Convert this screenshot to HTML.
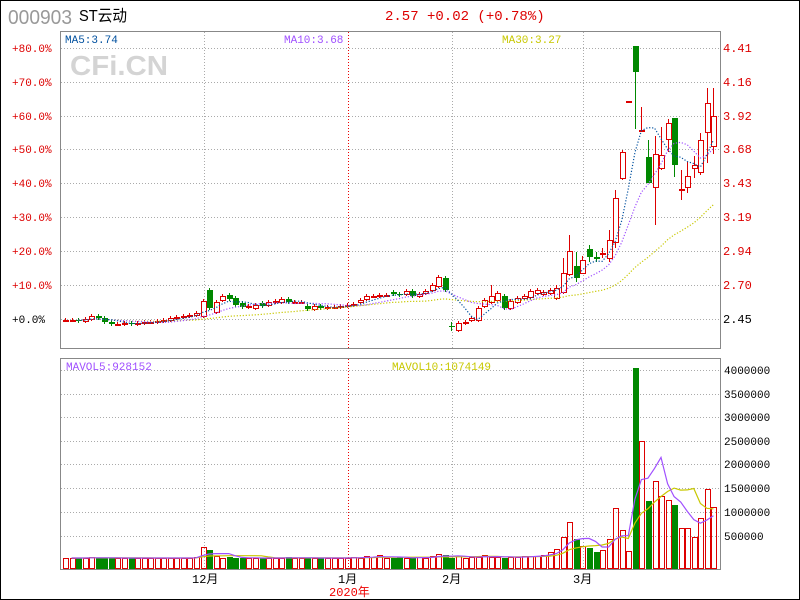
<!DOCTYPE html>
<html><head><meta charset="utf-8"><style>
html,body{margin:0;padding:0;background:#fff}
#w{position:relative;width:798px;height:598px;border:1px solid #000;overflow:hidden}
svg{position:absolute;left:-1px;top:-1px}
text{font-family:"Liberation Mono","Noto Sans CJK SC",monospace}
text.sans{font-family:"Liberation Sans","Noto Sans CJK SC",sans-serif}
</style></head><body><div id="w">
<svg id="s" width="800" height="600" xmlns="http://www.w3.org/2000/svg" shape-rendering="crispEdges">
<text class="sans" x="8" y="24" font-size="20" fill="#999" textLength="64" lengthAdjust="spacingAndGlyphs">000903</text>
<text class="sans" x="79" y="21" font-size="16" fill="#000" textLength="48" lengthAdjust="spacingAndGlyphs">ST云动</text>
<text x="385" y="20" font-size="14" fill="#d00">2.57 +0.02 (+0.78%)</text>
<rect x="60.5" y="31.5" width="660" height="317" fill="none" stroke="#888"/>
<rect x="60.5" y="358.5" width="660" height="211" fill="none" stroke="#888"/>
<text class="sans" x="70" y="75" font-weight="bold" font-size="28" fill="#d4d4d4" textLength="98" lengthAdjust="spacingAndGlyphs">CFi.CN</text>
<g id="grid" stroke="#aaa" stroke-dasharray="1,2"></g>
<g id="ax" font-size="11"></g>
<text x="65" y="43" font-size="11" fill="#00509f">MA5:3.74</text>
<text x="284" y="43" font-size="11" fill="#a050ff">MA10:3.68</text>
<text x="502" y="43" font-size="11" fill="#c8c800">MA30:3.27</text>
<text x="66" y="370" font-size="11" fill="#a050ff">MAVOL5:928152</text>
<text x="392" y="370" font-size="11" fill="#c8c800">MAVOL10:1074149</text>
<g id="c"></g>
<text x="192" y="583" font-size="12" fill="#000">12月</text>
<text x="338" y="583" font-size="12" fill="#000">1月</text>
<text x="442" y="583" font-size="12" fill="#000">2月</text>
<text x="573" y="583" font-size="12" fill="#000">3月</text>
<text x="329" y="596" font-size="12" fill="#e00">2020年</text>
</svg></div>
<script>
var S='http://www.w3.org/2000/svg';
function el(p,t,a){var e=document.createElementNS(S,t);for(var k in a)e.setAttribute(k,a[k]);p.appendChild(e);return e}
var G=document.getElementById('grid'),A=document.getElementById('ax'),C=document.getElementById('c');
var py=[48,82,116,149,183,217,251,285,319],pl=['+80.0%','+70.0%','+60.0%','+50.0%','+40.0%','+30.0%','+20.0%','+10.0%','+0.0%'],pr=['4.41','4.16','3.92','3.68','3.43','3.19','2.94','2.70','2.45'];
py.forEach(function(y,i){el(G,'line',{x1:61,x2:720,y1:y+.5,y2:y+.5});
var t=el(A,'text',{x:12,y:y+4,fill:i==8?'#000':'#d00'});t.textContent=pl[i];
var t2=el(A,'text',{x:723,y:y+4,fill:i==8?'#000':'#d00','font-size':12});t2.textContent=pr[i];});
var vy=[370,394,417,441,464,488,512,536],vl=['4000000','3500000','3000000','2500000','2000000','1500000','1000000','500000'];
vy.forEach(function(y,i){el(G,'line',{x1:61,x2:720,y1:y+.5,y2:y+.5});var t=el(A,'text',{x:724,y:y+4,fill:'#000'});t.textContent=vl[i];});
[204,452,583].forEach(function(x){el(G,'line',{x1:x+.5,x2:x+.5,y1:32,y2:348});el(G,'line',{x1:x+.5,x2:x+.5,y1:359,y2:569});});
el(G,'line',{x1:348.5,x2:348.5,y1:32,y2:348,stroke:'#e00'});el(G,'line',{x1:348.5,x2:348.5,y1:359,y2:569,stroke:'#e00'});
var D=[320,320,321,319,316,318,322,324,324,323,324,323,322,322,321,320,318,317,316,315,313,
[316,301],[290,308],[312,302],[300,296],[295,299],[298,305],[303,307],306,[308,305],[303,306],[305,302],[302,301],[302,299],[299,302],302,302,[306,309],[309,306],[306,308],307,307,306,305,304,[302,300],[299,296],296,295,295,[292,294],295,[294,291],[291,296],294,[293,291],[290,285],[286,277],[278,290],
[326,327,322,331],[330,323],322,[320,318],[320,308],[306,300],[302,296,285],[300,293],[296,308],[308,301],[302,298],[298,296],[297,291],[293,290],
[294,292],[293,290],[298,288,285,300],[292,273,258,294],[274,251,235,276],[266,278,252,282],[273,260,256,274],[249,257,245,262],[257,259,252,262],[253,253,248,258],[258,240,230,262],
[242,198,190,248],[178,152,150,180],[101,101,101,102],[46,72,46,129],[130,130,107,130],[157,183,140,183],[187,154,136,225],[168,155,127,170],[139,123,119,152],[118,165,118,177],[189,189,170,200],[187,176,162,193],[168,165,156,178],[172,140,133,175],[132,103,88,163],[146,116,88,154]];
var V=[11,11,11,11,12,11,11,11,11,11,11,11,11,11,11,11,11,11,11,11,12,22,19,13,11,12,11,11,11,11,11,11,11,11,12,11,11,11,11,11,11,11,11,11,12,11,13,12,14,11,11,12,11,11,12,11,13,15,14,11,13,11,12,12,14,12,12,11,12,12,13,13,13,
14,17,20,32,47,30,23,21,17,19,30,61,39,18,201,128,68,88,73,69,64,41,41,32,51,80,62];
var X=function(i){return 65+6.55*i},cl=[],prev=320;
D.forEach(function(d,i){var o,c,h,l;if(typeof d=='number'){o=prev;c=d}else{o=d[0];c=d[1]}
h=d[2]!=null?d[2]:Math.min(o,c)-2;l=d[3]!=null?d[3]:Math.max(o,c)+2;prev=c;cl.push(c);
var x=Math.round(X(i)),up=c<=o,col=up?'#d00':'#080';
el(C,'line',{x1:x+.5,x2:x+.5,y1:h,y2:l,stroke:col});
var t=Math.min(o,c),b=Math.max(o,c);if(b-t<1)b=t+1;
if(up)el(C,'rect',{x:x-2+.5,y:t+.5,width:5,height:b-t,fill:'#fff',stroke:col,'stroke-width':1});
else el(C,'rect',{x:x-2,y:t,width:6,height:b-t,fill:col});
var vh=V[i]||11,vc=up?'#d00':'#080';
if(up)el(C,'rect',{x:x-2+.5,y:569-vh+.5,width:5,height:vh-1,fill:'none',stroke:vc,'stroke-width':1});
else el(C,'rect',{x:x-2,y:569-vh,width:6,height:vh,fill:vc});});
function ma(a,n){var r=[];for(var i=0;i<a.length;i++){var s=0,k=0;for(var j=Math.max(0,i-n+1);j<=i;j++){s+=a[j];k++}r.push(s/k)}return r}
function pl2(a,col,dash,st){var p=a.map(function(v,i){return X(i).toFixed(1)+','+v.toFixed(1)}).slice(st).join(' ');
var o={points:p,fill:'none',stroke:col,'stroke-width':1.2,'shape-rendering':'auto'};if(dash)o['stroke-dasharray']='1.2,1.8';el(C,'polyline',o)}
pl2(ma(cl,30),'#c8c800',1,2);pl2(ma(cl,10),'#a050ff',1,2);pl2(ma(cl,5),'#00509f',1,2);
var vv=V.map(function(h){return 569-h});pl2(ma(vv,10),'#c8c800',0,1);pl2(ma(vv,5),'#a050ff',0,1);
</script></body></html>
